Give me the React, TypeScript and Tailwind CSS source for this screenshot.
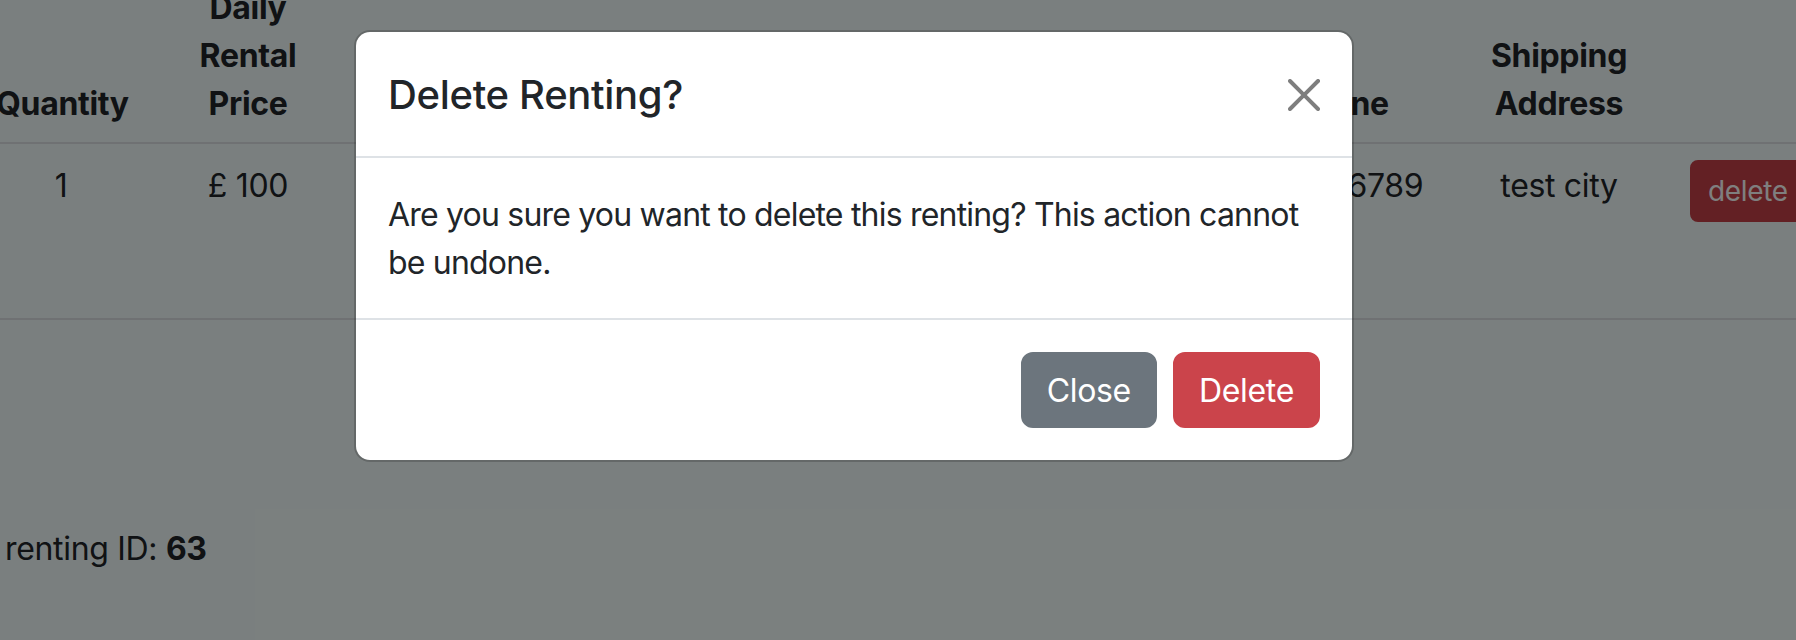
import React from 'react';

const cols = 'grid grid-cols-[162px_212px_200px_200px_240px_242px_208px_230px_200px]';

const App: React.FC = () => {
  return (
    <div className="relative h-[640px] w-[1796px] overflow-hidden bg-[#f5fffe] font-['Inter',sans-serif] tracking-[-0.02em] text-[#212529]">
      {/* page behind the dialog, scrolled a little */}
      <div className="-ml-[20px] -mt-[34px] text-[32px] leading-[48px]">
        <div className={`${cols} items-end border-b-2 border-[#dee2e6] text-center font-bold [&>div]:px-4 [&>div]:pb-[14px] [&>div]:pt-[18px]`}>
          <div>Quantity</div>
          <div>Daily Rental Price</div>
          <div>Start Date</div>
          <div>End Date</div>
          <div>Renter Name</div>
          <div>Email</div>
          <div>Phone</div>
          <div>Shipping Address</div>
          <div />
        </div>
        <div className={`${cols} h-[176px] items-start border-b-2 border-[#dee2e6] text-center [&>div]:px-4 [&>div]:pt-[18px]`}>
          <div>1</div>
          <div>£ 100</div>
          <div>2024-05-01</div>
          <div>2024-05-03</div>
          <div>test user</div>
          <div className="break-all">test@test.com</div>
          <div>123456789</div>
          <div>test city</div>
          <div className="!pt-4 text-left">
            <button className="rounded-[8px] border-2 border-[#c64148] bg-[#c64148] px-4 py-2 text-[28px] leading-[42px] text-white">
              delete
            </button>
          </div>
        </div>
        <p className="ml-[25px] mt-[205px]">
          renting ID: <b className="font-bold">63</b>
        </p>
      </div>

      {/* backdrop */}
      <div className="absolute inset-0 bg-black/50" />

      {/* dialog */}
      <div className="absolute left-[354px] top-[30px] w-[1000px] rounded-[16px] border-2 border-black/[0.175] bg-white bg-clip-padding">
        <div className="flex items-center justify-between border-b-2 border-[#dee2e6] px-8 pb-[31px] pt-[33px]">
          <h5 className="text-[40px] font-medium leading-[60px]">Delete Renting?</h5>
          <button aria-label="Close" className="h-8 w-8 opacity-50">
            <svg viewBox="0 0 16 16" className="h-8 w-8" fill="#000">
              <path d="M.293.293a1 1 0 0 1 1.414 0L8 6.586 14.293.293a1 1 0 1 1 1.414 1.414L9.414 8l6.293 6.293a1 1 0 0 1-1.414 1.414L8 9.414l-6.293 6.293a1 1 0 0 1-1.414-1.414L6.586 8 .293 1.707a1 1 0 0 1 0-1.414z" />
            </svg>
          </button>
        </div>
        <div className="px-8 pb-[31px] pt-[33px] text-[32px] leading-[48px] tracking-[-0.025em]">
          Are you sure you want to delete this renting? This action cannot be undone.
        </div>
        <div className="flex justify-end gap-4 border-t-2 border-[#dee2e6] p-8">
          <button className="rounded-[12px] border-2 border-[#6c757d] bg-[#6c757d] px-6 pb-[11px] pt-[13px] text-[32px] leading-[48px] text-white">
            Close
          </button>
          <button className="rounded-[12px] border-2 border-[#cb444b] bg-[#cb444b] px-6 pb-[11px] pt-[13px] text-[32px] leading-[48px] text-white">
            Delete
          </button>
        </div>
      </div>
    </div>
  );
};

export default App;
